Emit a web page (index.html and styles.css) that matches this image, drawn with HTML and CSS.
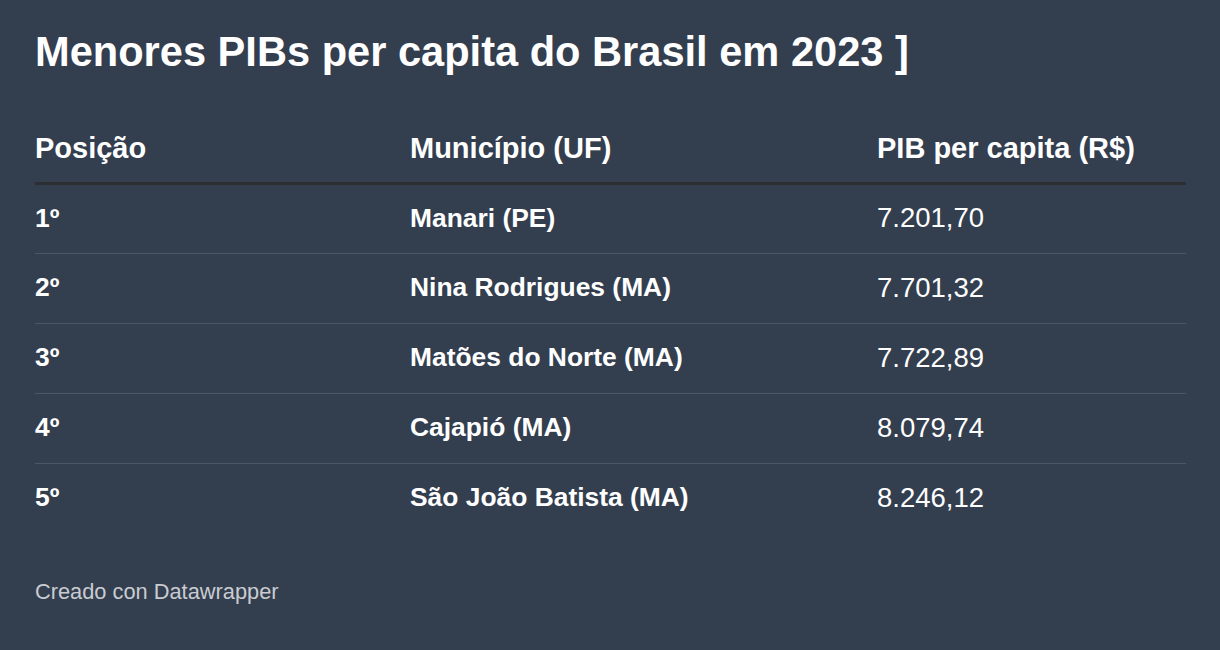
FILE: index.html
```html
<!DOCTYPE html>
<html lang="pt">
<head>
<meta charset="utf-8">
<title>Menores PIBs per capita do Brasil em 2023</title>
<link rel="stylesheet" href="styles.css">
</head>
<body>
<main class="chart">
  <h1 class="title">Menores PIBs per capita do Brasil em 2023 ]</h1>
  <table class="table">
    <thead>
      <tr>
        <th class="c-pos">Posição</th>
        <th class="c-mun">Município (UF)</th>
        <th class="c-val">PIB per capita (R$)</th>
      </tr>
    </thead>
    <tbody>
      <tr><td class="c-pos">1º</td><td class="c-mun">Manari (PE)</td><td class="c-val">7.201,70</td></tr>
      <tr><td class="c-pos">2º</td><td class="c-mun">Nina Rodrigues (MA)</td><td class="c-val">7.701,32</td></tr>
      <tr><td class="c-pos">3º</td><td class="c-mun">Matões do Norte (MA)</td><td class="c-val">7.722,89</td></tr>
      <tr><td class="c-pos">4º</td><td class="c-mun">Cajapió (MA)</td><td class="c-val">8.079,74</td></tr>
      <tr><td class="c-pos">5º</td><td class="c-mun">São João Batista (MA)</td><td class="c-val">8.246,12</td></tr>
    </tbody>
  </table>
  <footer class="footer">Creado con Datawrapper</footer>
</main>
</body>
</html>
```

FILE: styles.css
```css
html, body {
  margin: 0;
  padding: 0;
  background: #333e4f;
}

body {
  font-family: "Liberation Sans", Arial, Helvetica, sans-serif;
  color: #ffffff;
}

.chart {
  padding: 27px 34px 0 35px;
}

.title {
  margin: 0;
  font-size: 41.6px;
  line-height: 50px;
  font-weight: bold;
}

.table {
  width: 100%;
  border-collapse: collapse;
  margin-top: 54px;
  table-layout: fixed;
}

.table th {
  text-align: left;
  font-size: 29px;
  line-height: 34px;
  font-weight: bold;
  padding: 0 0 17px 0;
  border-bottom: 3px solid #2d2e31;
}

.table td {
  box-sizing: border-box;
  height: 70px;
  padding: 0 0 2px 0;
  vertical-align: middle;
  border-bottom: 1px solid #4c5667;
  font-size: 26.4px;
  font-weight: bold;
}

.table tbody tr:last-child td {
  border-bottom: none;
}

.table td.c-val {
  font-weight: normal;
  font-size: 27.5px;
}

.c-pos { width: 375px; }
.c-mun { width: 467px; }

.footer {
  margin-top: 45px;
  font-size: 21.8px;
  line-height: 26px;
  color: #c9ccd1;
}
```
